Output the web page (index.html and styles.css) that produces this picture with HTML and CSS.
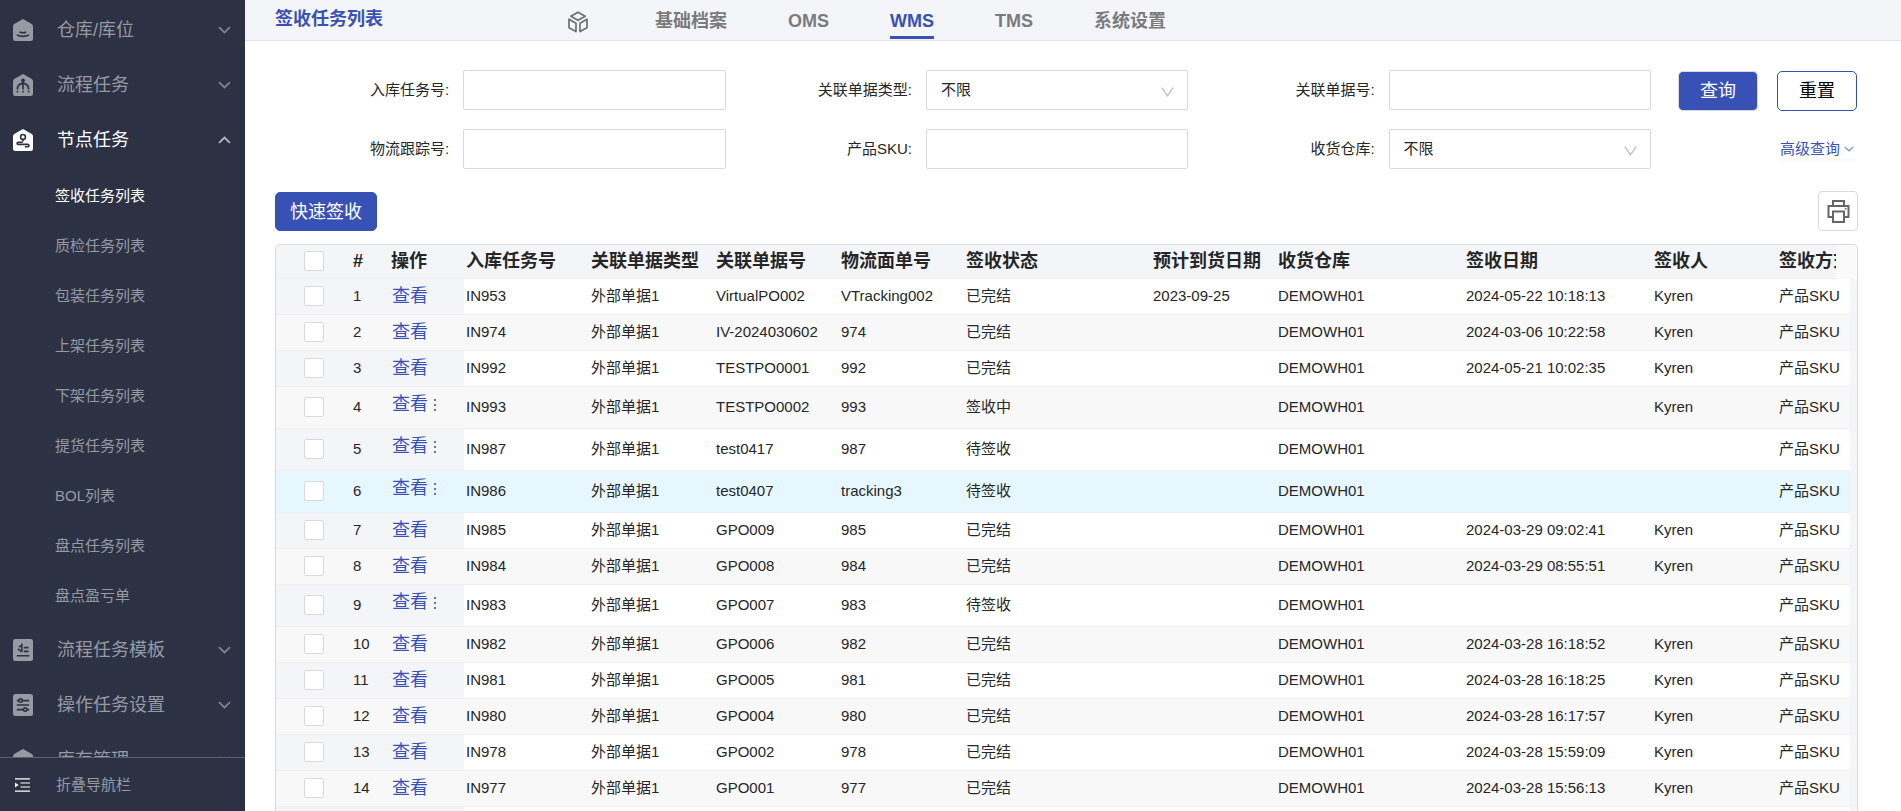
FILE: index.html
```html
<!DOCTYPE html>
<html lang="zh-CN">
<head>
<meta charset="utf-8">
<title>签收任务列表</title>
<link rel="stylesheet" href="styles.css">
</head>
<body>
<svg class="defs" aria-hidden="true">
  <symbol id="chev" viewBox="0 0 13 8"><path d="M1 1.2 6.5 6.4 12 1.2" fill="none" stroke="currentColor" stroke-width="1.8"/></symbol>
  <symbol id="arrow" viewBox="0 0 13 10"><path d="M0.8 0.6 6.5 8.8 12.2 0.6" fill="none" stroke="currentColor" stroke-width="1.3"/></symbol>
  <symbol id="house" viewBox="0 0 20 22"><path d="M10 0 18.8 5Q20 5.8 20 7.2V19.5Q20 22 17.5 22H2.5Q0 22 0 19.5V7.2Q0 5.8 1.2 5Z" fill="currentColor"/></symbol>
</svg>
<div class="app">
  <aside class="side">
    <nav class="menu">
      <div class="group">
        <button class="head"><svg class="gi" viewBox="0 0 20 22"><use href="#house"/><path d="M6.5 13Q10 14.6 13.2 13M3.8 16Q10 18.8 16 16" class="cut"/></svg><span>仓库/库位</span><svg class="chev"><use href="#chev"/></svg></button>
      </div>
      <div class="group">
        <button class="head"><svg class="gi" viewBox="0 0 20 22"><use href="#house"/><circle cx="10" cy="6.4" r="1.9" class="hole"/><path d="M10 7V15.5M10 9.4C6 9.6 4.4 12 4.4 15.5M10 9.4C14 9.6 15.6 12 15.6 15.5M10 16.8V18.4M4.4 16.8V18.4M15.6 16.8V18.4" class="cut"/></svg><span>流程任务</span><svg class="chev"><use href="#chev"/></svg></button>
      </div>
      <div class="group">
        <button class="head on"><svg class="gi" viewBox="0 0 20 22"><use href="#house"/><circle cx="10" cy="7.9" r="2.4" class="cut"/><path d="M10 10.4V12.6M9.6 13.2H5.4C3.6 13.2 3.6 15.4 5.4 15.4H14.6C16.6 15.4 16.4 17.8 14.6 17.8H12" class="cut"/></svg><span>节点任务</span><svg class="chev up"><use href="#chev"/></svg></button>
        <div class="sub">
          <a class="on" href="#">签收任务列表</a>
          <a href="#">质检任务列表</a>
          <a href="#">包装任务列表</a>
          <a href="#">上架任务列表</a>
          <a href="#">下架任务列表</a>
          <a href="#">提货任务列表</a>
          <a href="#">BOL列表</a>
          <a href="#">盘点任务列表</a>
          <a href="#">盘点盈亏单</a>
        </div>
      </div>
      <div class="group">
        <button class="head"><svg class="gi" viewBox="0 0 20 22"><rect width="20" height="22" rx="2.5" fill="currentColor"/><path d="M8.8 4.6V13.2M8.8 7.4H5.8M8.8 12.6 4.8 9.8M10.8 8.6H15.6M10.8 12.4H15.6M3.8 16.8H16.2" class="cut"/></svg><span>流程任务模板</span><svg class="chev"><use href="#chev"/></svg></button>
      </div>
      <div class="group">
        <button class="head"><svg class="gi" viewBox="0 0 20 22"><rect width="20" height="22" rx="2.5" fill="currentColor"/><path d="M3.8 6.6H6M9.4 6.6H16.2M3.8 11H16.2M3.8 15.6H10.4M14 15.6H16.2" class="cut"/><circle cx="7.6" cy="6.6" r="1.7" class="cut"/><circle cx="12.2" cy="15.6" r="1.7" class="cut"/></svg><span>操作任务设置</span><svg class="chev"><use href="#chev"/></svg></button>
      </div>
      <div class="group">
        <button class="head"><svg class="gi" viewBox="0 0 20 22"><use href="#house"/></svg><span>库存管理</span><svg class="chev"><use href="#chev"/></svg></button>
      </div>
    </nav>
    <button class="fold"><svg viewBox="0 0 15 14" width="15" height="14"><path d="M0 .8H15M5.5 5H15M5.5 9H15M0 13.2H15" stroke="#fff" stroke-width="1.2"/><path d="M0 4.4 3.6 7 0 9.6Z" fill="#fff"/></svg><span>折叠导航栏</span></button>
  </aside>

  <main class="main">
    <header class="top">
      <h1>签收任务列表</h1>
      <nav class="tabs">
        <a class="cube" href="#" aria-label="首页"><svg viewBox="0 0 20 22" width="20" height="22"><g fill="none" stroke="#6f6f72" stroke-width="1.7" stroke-linejoin="round"><path d="M10 1.2 17.2 5.2 10 9.2 2.8 5.2Z"/><path d="M1 8.2 8 12.2V20.6L1 16.8ZM19 8.2 12 12.2V20.6L19 16.8Z"/></g></svg></a>
        <a href="#">基础档案</a>
        <a href="#">OMS</a>
        <a class="on" href="#">WMS</a>
        <a href="#">TMS</a>
        <a href="#">系统设置</a>
      </nav>
    </header>

    <form class="search">
      <div class="fields">
        <div class="field"><label for="f1">入库任务号:</label><input id="f1" type="text"></div>
        <div class="field"><label for="f2">关联单据类型:</label><div class="pick"><select id="f2"><option>不限</option></select><svg><use href="#arrow"/></svg></div></div>
        <div class="field"><label for="f3">关联单据号:</label><input id="f3" type="text"></div>
        <div class="field"><label for="f4">物流跟踪号:</label><input id="f4" type="text"></div>
        <div class="field"><label for="f5">产品SKU:</label><input id="f5" type="text"></div>
        <div class="field"><label for="f6">收货仓库:</label><div class="pick"><select id="f6"><option>不限</option></select><svg><use href="#arrow"/></svg></div></div>
      </div>
      <div class="acts">
        <div class="btns"><button type="button" class="btn primary">查询</button><button type="button" class="btn">重置</button></div>
        <button type="button" class="more">高级查询<svg><use href="#chev"/></svg></button>
      </div>
    </form>

    <div class="tools">
      <button class="btn primary quick">快速签收</button>
      <button class="print" aria-label="打印"><svg viewBox="0 0 23 24" width="23" height="24"><g fill="none" stroke="#666" stroke-width="2"><path d="M6 7V2H17V7"/><path d="M6 18H1.5V7H21.5V18H17"/><path d="M6 12.5H17V23H6Z"/></g><path d="M18 9H19.5V10.5H18Z" fill="#666"/></svg></button>
    </div>

    <div class="grid">
      <div class="corner"></div>
      <div class="scroll">
        <table>
          <colgroup><col class="c75"><col class="c38"><col class="c75"><col class="c125"><col class="c125"><col class="c125"><col class="c125"><col class="c187"><col class="c125"><col class="c188"><col class="c188"><col class="c125"><col class="c125"></colgroup>
          <thead>
            <tr><th><input type="checkbox" aria-label="全选"></th><th>#</th><th>操作</th><th>入库任务号</th><th>关联单据类型</th><th>关联单据号</th><th>物流面单号</th><th>签收状态</th><th>预计到货日期</th><th>收货仓库</th><th>签收日期</th><th>签收人</th><th>签收方式</th></tr>
          </thead>
          <tbody>
            <tr><td><input type="checkbox" aria-label="选择 1"></td><td>1</td><td><a href="#">查看</a></td><td>IN953</td><td>外部单据1</td><td>VirtualPO002</td><td>VTracking002</td><td>已完结</td><td>2023-09-25</td><td>DEMOWH01</td><td>2024-05-22 10:18:13</td><td>Kyren</td><td>产品SKU</td></tr>
            <tr><td><input type="checkbox" aria-label="选择 2"></td><td>2</td><td><a href="#">查看</a></td><td>IN974</td><td>外部单据1</td><td>IV-2024030602</td><td>974</td><td>已完结</td><td></td><td>DEMOWH01</td><td>2024-03-06 10:22:58</td><td>Kyren</td><td>产品SKU</td></tr>
            <tr><td><input type="checkbox" aria-label="选择 3"></td><td>3</td><td><a href="#">查看</a></td><td>IN992</td><td>外部单据1</td><td>TESTPO0001</td><td>992</td><td>已完结</td><td></td><td>DEMOWH01</td><td>2024-05-21 10:02:35</td><td>Kyren</td><td>产品SKU</td></tr>
            <tr class="tall"><td><input type="checkbox" aria-label="选择 4"></td><td>4</td><td><a href="#">查看</a><button class="dots" aria-label="更多"><i></i><i></i><i></i></button></td><td>IN993</td><td>外部单据1</td><td>TESTPO0002</td><td>993</td><td>签收中</td><td></td><td>DEMOWH01</td><td></td><td>Kyren</td><td>产品SKU</td></tr>
            <tr class="tall"><td><input type="checkbox" aria-label="选择 5"></td><td>5</td><td><a href="#">查看</a><button class="dots" aria-label="更多"><i></i><i></i><i></i></button></td><td>IN987</td><td>外部单据1</td><td>test0417</td><td>987</td><td>待签收</td><td></td><td>DEMOWH01</td><td></td><td></td><td>产品SKU</td></tr>
            <tr class="tall hover"><td><input type="checkbox" aria-label="选择 6"></td><td>6</td><td><a href="#">查看</a><button class="dots" aria-label="更多"><i></i><i></i><i></i></button></td><td>IN986</td><td>外部单据1</td><td>test0407</td><td>tracking3</td><td>待签收</td><td></td><td>DEMOWH01</td><td></td><td></td><td>产品SKU</td></tr>
            <tr><td><input type="checkbox" aria-label="选择 7"></td><td>7</td><td><a href="#">查看</a></td><td>IN985</td><td>外部单据1</td><td>GPO009</td><td>985</td><td>已完结</td><td></td><td>DEMOWH01</td><td>2024-03-29 09:02:41</td><td>Kyren</td><td>产品SKU</td></tr>
            <tr><td><input type="checkbox" aria-label="选择 8"></td><td>8</td><td><a href="#">查看</a></td><td>IN984</td><td>外部单据1</td><td>GPO008</td><td>984</td><td>已完结</td><td></td><td>DEMOWH01</td><td>2024-03-29 08:55:51</td><td>Kyren</td><td>产品SKU</td></tr>
            <tr class="tall"><td><input type="checkbox" aria-label="选择 9"></td><td>9</td><td><a href="#">查看</a><button class="dots" aria-label="更多"><i></i><i></i><i></i></button></td><td>IN983</td><td>外部单据1</td><td>GPO007</td><td>983</td><td>待签收</td><td></td><td>DEMOWH01</td><td></td><td></td><td>产品SKU</td></tr>
            <tr><td><input type="checkbox" aria-label="选择 10"></td><td>10</td><td><a href="#">查看</a></td><td>IN982</td><td>外部单据1</td><td>GPO006</td><td>982</td><td>已完结</td><td></td><td>DEMOWH01</td><td>2024-03-28 16:18:52</td><td>Kyren</td><td>产品SKU</td></tr>
            <tr><td><input type="checkbox" aria-label="选择 11"></td><td>11</td><td><a href="#">查看</a></td><td>IN981</td><td>外部单据1</td><td>GPO005</td><td>981</td><td>已完结</td><td></td><td>DEMOWH01</td><td>2024-03-28 16:18:25</td><td>Kyren</td><td>产品SKU</td></tr>
            <tr><td><input type="checkbox" aria-label="选择 12"></td><td>12</td><td><a href="#">查看</a></td><td>IN980</td><td>外部单据1</td><td>GPO004</td><td>980</td><td>已完结</td><td></td><td>DEMOWH01</td><td>2024-03-28 16:17:57</td><td>Kyren</td><td>产品SKU</td></tr>
            <tr><td><input type="checkbox" aria-label="选择 13"></td><td>13</td><td><a href="#">查看</a></td><td>IN978</td><td>外部单据1</td><td>GPO002</td><td>978</td><td>已完结</td><td></td><td>DEMOWH01</td><td>2024-03-28 15:59:09</td><td>Kyren</td><td>产品SKU</td></tr>
            <tr><td><input type="checkbox" aria-label="选择 14"></td><td>14</td><td><a href="#">查看</a></td><td>IN977</td><td>外部单据1</td><td>GPO001</td><td>977</td><td>已完结</td><td></td><td>DEMOWH01</td><td>2024-03-28 15:56:13</td><td>Kyren</td><td>产品SKU</td></tr>
            <tr><td></td><td></td><td></td><td></td><td></td><td></td><td></td><td></td><td></td><td></td><td></td><td></td><td></td></tr>
          </tbody>
        </table>
      </div>
    </div>
  </main>
</div>
</body>
</html>
```

FILE: styles.css
```css
* { box-sizing: border-box; }
body {
  margin: 0;
  font: 15px/20px "Liberation Sans", "Noto Sans CJK SC", sans-serif;
  color: #262626;
  background: #fff;
}
button, input, select { font: inherit; color: inherit; margin: 0; }
button { background: none; border: 0; padding: 0; cursor: pointer; }
a { color: inherit; text-decoration: none; }
.defs { position: absolute; width: 0; height: 0; }

.app { display: flex; height: 100vh; overflow: hidden; }

/* Sidebar */
.side {
  flex: 0 0 245px;
  display: flex;
  flex-direction: column;
  background: #2c3144;
  color: #969aa2;
}
.menu {
  flex: 1;
  min-height: 0;
  overflow: hidden;
  display: flex;
  flex-direction: column;
  gap: 5px;
  padding-top: 5px;
}
.group { flex: none; }
.head {
  display: flex;
  align-items: center;
  width: 100%;
  height: 50px;
  padding: 0 14px 0 13px;
  font-size: 18px;
}
.head span { flex: 1; margin-left: 24px; text-align: left; }
.gi { width: 20px; height: 22px; }
.cut { fill: none; stroke: #2c3144; stroke-width: 1.6; }
.hole { fill: #2c3144; }
.chev { width: 13px; height: 8px; color: #7f838e; }
.up { transform: scaleY(-1); }
.on { color: #fff; }
.on .chev { color: #b4b7be; }
.sub { padding-top: 6px; margin-bottom: -1px; }
.sub a { display: block; padding-left: 55px; line-height: 50px; }
.fold {
  flex: 0 0 54px;
  display: flex;
  align-items: center;
  gap: 26px;
  padding-left: 15px;
  border-top: 1px solid #5d616f;
}

/* Header */
.main { flex: 1; min-width: 0; display: flex; flex-direction: column; }
.top {
  flex: 0 0 41px;
  display: flex;
  background: #f4f5f9;
  border-bottom: 1px solid #e1e2e6;
  padding-left: 30px;
}
.top h1 {
  margin: 0;
  font-size: 18px;
  line-height: 38px;
  color: #3851b4;
}
.tabs { display: flex; gap: 61px; margin-left: 185px; }
.tabs a {
  height: 39px;
  padding-top: 2px;
  font-size: 18px;
  line-height: 38px;
  font-weight: bold;
  color: #7b7b7d;
}
.tabs .on { line-height: 34px; padding-top: 4px; color: #3851b4; border-bottom: 3px solid #3851b4; }
.tabs .cube { display: flex; align-items: center; padding: 4px 6px 0 0; }

/* Search form */
.search { display: flex; padding: 29px 44px 0 18px; }
.fields {
  flex: 1;
  display: grid;
  grid-template-columns: repeat(3, 1fr);
  gap: 19px 0;
}
.field { display: grid; grid-template-columns: 200fr 262fr; align-items: center; }
.field label { padding-right: 14px; text-align: right; }
.field input, .field select {
  width: 100%;
  height: 40px;
  padding: 0 14px;
  background: #fff;
  border: 1px solid #d9d9d9;
  border-radius: 2px;
}
.pick { position: relative; }
.pick select { appearance: none; display: block; }
.pick svg {
  position: absolute;
  right: 14px;
  top: 17px;
  width: 13px;
  height: 10px;
  color: #bfbfbf;
  pointer-events: none;
}
.acts {
  flex: 0 0 206px;
  display: flex;
  flex-direction: column;
  align-items: flex-end;
  gap: 28px;
  padding-top: 1px;
}
.btns { display: flex; gap: 19px; }
.btn {
  width: 80px;
  height: 40px;
  border: 1px solid #3851b4;
  border-radius: 5px;
  font-size: 18px;
  color: #000;
  background: #fff;
}
.primary { background: #3851b4; border-color: #d9d9d9; color: #fff; }
.more {
  display: flex;
  align-items: center;
  gap: 4px;
  padding-right: 3px;
  color: #3851b4;
  box-shadow: 0 2px 0 rgba(0, 0, 0, 0.02);
}
.more svg { width: 10px; height: 6px; color: #8796d1; }

/* Toolbar */
.tools {
  display: flex;
  justify-content: space-between;
  align-items: flex-end;
  padding: 22px 43px 0 30px;
}
.quick { width: 102px; height: 39px; border-color: #3851b4; }
.print {
  width: 40px;
  height: 40px;
  display: flex;
  align-items: center;
  justify-content: center;
  border: 1px solid #d9d9d9;
  border-radius: 4px;
}

/* Table */
.grid {
  position: relative;
  flex: 1;
  min-height: 0;
  margin: 13px 43px 0 30px;
  padding-right: 7px;
  background: #f4f5f9;
  border: 1px solid #d9d9d9;
  border-bottom: 0;
  border-radius: 5px 5px 0 0;
  overflow: hidden;
}
.corner {
  position: absolute;
  top: 0;
  right: 0;
  width: 21px;
  height: 34px;
  background: #fafafa;
}
.scroll { height: 100%; overflow: hidden; }
table {
  width: 1626px;
  min-width: 100%;
  table-layout: fixed;
  border-collapse: separate;
  border-spacing: 0;
}
.c38 { width: 38px; }
.c75 { width: 75px; }
.c125 { width: 125px; }
.c187 { width: 187px; }
.c188 { width: 188px; }
th, td {
  height: 36px;
  padding: 0 2px 1px;
  border-bottom: 1px solid #efefef;
  text-align: left;
  white-space: nowrap;
  background: #fff;
}
th { height: 34px; font-size: 18px; background: #f4f5f9; }
.tall td { height: 42px; }
td:nth-child(-n+3) { background: #f4f5f9; }
td:nth-child(3) {
  padding: 0 0 0 3px;
  vertical-align: top;
  font-size: 18px;
  line-height: 34px;
  color: #3851b4;
}
tbody tr:nth-child(even) td { background: #f8f8f8; }
tbody tr.hover td { background: #e6f7ff; }
table input {
  appearance: none;
  display: block;
  width: 20px;
  height: 20px;
  margin: 0 auto;
  background: #fff;
  border: 1px solid #d9d9d9;
  border-radius: 2px;
}
.dots {
  display: inline-grid;
  gap: 3px;
  margin-left: 6px;
  vertical-align: middle;
}
.dots i { width: 2px; height: 2px; background: #5f74c4; }
```
